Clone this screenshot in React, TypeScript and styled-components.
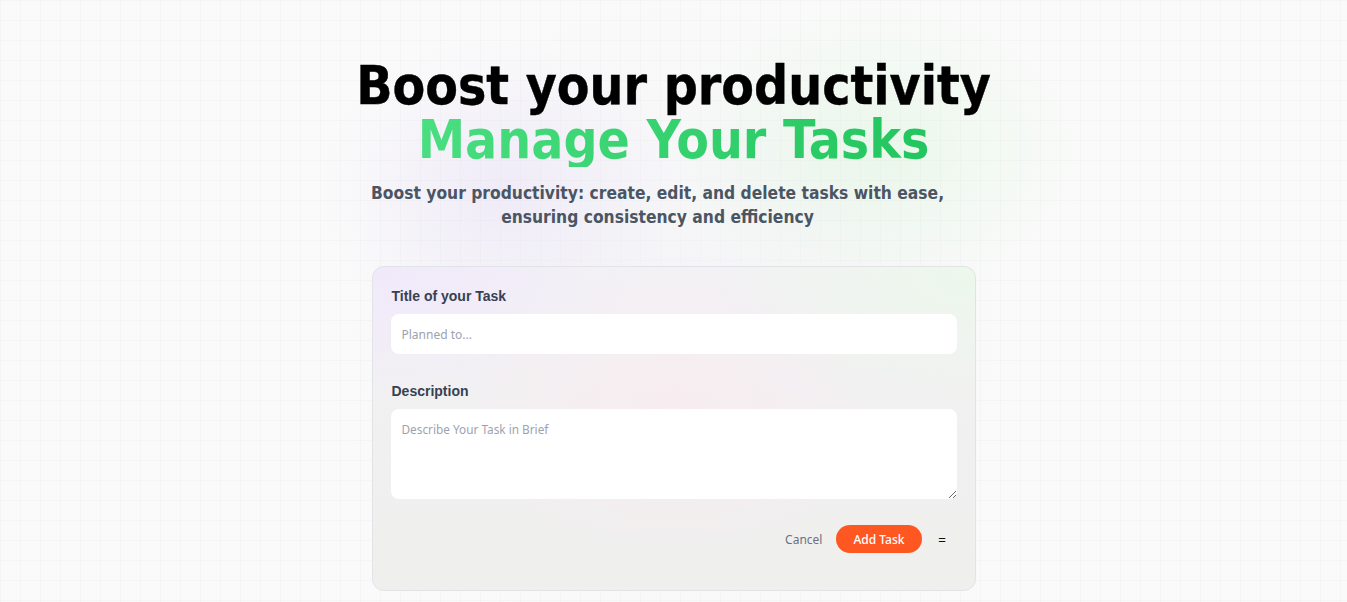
import React from "react";
import styled, { createGlobalStyle } from "styled-components";

const Global = createGlobalStyle`
  html, body { margin: 0; padding: 0; }
  body {
    background: #fafafa;
    font-family: "Noto Sans", "Open Sans", sans-serif;
  }
  * { box-sizing: border-box; }
`;

const Page = styled.main`
  min-height: 602px;
  display: flex;
  flex-direction: column;
  align-items: center;
  padding-top: 59px;
  background:
    radial-gradient(ellipse 260px 220px at 500px 190px, rgba(205, 185, 245, 0.2), transparent 70%),
    radial-gradient(ellipse 300px 220px at 880px 150px, rgba(175, 240, 175, 0.2), transparent 70%),
    radial-gradient(ellipse 260px 200px at 690px 420px, rgba(245, 190, 200, 0.14), transparent 70%),
    radial-gradient(circle 430px at 675px 330px, rgba(240, 240, 244, 0.6), transparent 80%),
    linear-gradient(rgba(0, 0, 0, 0.018) 1px, transparent 1px) 0 0 / 20px 20px,
    linear-gradient(90deg, rgba(0, 0, 0, 0.018) 1px, transparent 1px) 0 0 / 20px 20px,
    #fafafa;
`;

const Title = styled.h1`
  margin: 0;
  text-align: center;
  font-family: "DejaVu Sans Condensed", "DejaVu Sans", sans-serif;
  font-weight: 700;
  font-size: 53px;
  line-height: 54px;
  color: #000000;
  -webkit-text-stroke: 0.4px #000000;
`;

const Accent = styled.span`
  display: inline-block;
  background: linear-gradient(90deg, #4ade80, #22c55e);
  -webkit-background-clip: text;
  background-clip: text;
  color: transparent;
  -webkit-text-stroke: 0;
`;

const Subtitle = styled.p`
  margin: 14px 0 0;
  padding-right: 32px;
  text-align: center;
  font-family: "DejaVu Sans Condensed", "DejaVu Sans", sans-serif;
  font-weight: 700;
  font-size: 17.3px;
  line-height: 24px;
  color: #4b5563;
  max-width: 640px;
`;

const Card = styled.form`
  margin-top: 37px;
  width: 604px;
  padding: 19px 18px 31px;
  border: 1px solid #e2e3e6;
  border-radius: 12px;
  background:
    radial-gradient(ellipse 320px 160px at 0% 0%, rgba(240, 232, 252, 0.9), transparent 80%),
    radial-gradient(ellipse 320px 200px at 100% 0%, rgba(236, 248, 234, 0.9), transparent 80%),
    radial-gradient(ellipse 260px 180px at 50% 45%, rgba(248, 236, 240, 0.9), transparent 80%),
    linear-gradient(180deg, #f3f1f5 0%, #efefed 100%);
  display: flex;
  flex-direction: column;
`;

const Label = styled.label`
  display: block;
  font-family: "Liberation Sans", Arial, sans-serif;
  font-weight: 700;
  font-size: 14px;
  line-height: 20px;
  color: #374151;
  padding-left: 1px;
  margin-bottom: 8px;
`;

const Field = styled.div<{ $gap?: number }>`
  display: flex;
  flex-direction: column;
  margin-top: ${(p) => p.$gap ?? 0}px;
`;

const Input = styled.input`
  height: 40px;
  width: 100%;
  border: none;
  outline: none;
  border-radius: 8px;
  background: #ffffff;
  padding: 0 11px;
  font-family: "Noto Sans", sans-serif;
  font-size: 12px;
  color: #111827;
  &::placeholder { color: #9ca3af; }
`;

const TextArea = styled.textarea`
  height: 90px;
  width: 100%;
  border: none;
  outline: none;
  border-radius: 8px;
  background: #ffffff;
  padding: 12px 11px;
  font-family: "Noto Sans", sans-serif;
  font-size: 11.8px;
  color: #111827;
  resize: vertical;
  display: block;
  &::placeholder { color: #9ca3af; }
`;

const Actions = styled.div`
  margin-top: 20px;
  height: 40px;
  display: flex;
  justify-content: flex-end;
  align-items: center;
  gap: 6px;
`;

const Button = styled.button<{ $primary?: boolean }>`
  height: 28px;
  border: none;
  border-radius: 999px;
  padding: ${(p) => (p.$primary ? "0 17px" : "0 8px")};
  background: ${(p) => (p.$primary ? "#ff5722" : "transparent")};
  color: ${(p) => (p.$primary ? "#ffffff" : "#6b7280")};
  font-family: "Noto Sans", sans-serif;
  font-weight: ${(p) => (p.$primary ? 500 : 400)};
  font-size: 12px;
  cursor: pointer;
`;

const Handle = styled.button`
  width: 29px;
  height: 28px;
  border: none;
  background: transparent;
  font-family: "Liberation Sans", Arial, sans-serif;
  font-size: 13px;
  color: #111;
  padding: 0;
  cursor: grab;
`;

export default function App() {
  return (
    <>
      <Global />
      <Page>
        <Title>
          Boost your productivity
          <br />
          <Accent>Manage Your Tasks</Accent>
        </Title>
        <Subtitle>
          Boost your productivity: create, edit, and delete tasks with ease,
          ensuring consistency and efficiency
        </Subtitle>
        <Card onSubmit={(e) => e.preventDefault()}>
          <Field>
            <Label htmlFor="title">Title of your Task</Label>
            <Input id="title" placeholder="Planned to..." />
          </Field>
          <Field $gap={27}>
            <Label htmlFor="desc">Description</Label>
            <TextArea id="desc" placeholder="Describe Your Task in Brief" />
          </Field>
          <Actions>
            <Button type="button">Cancel</Button>
            <Button type="submit" $primary>
              Add Task
            </Button>
            <Handle type="button">=</Handle>
          </Actions>
        </Card>
      </Page>
    </>
  );
}
